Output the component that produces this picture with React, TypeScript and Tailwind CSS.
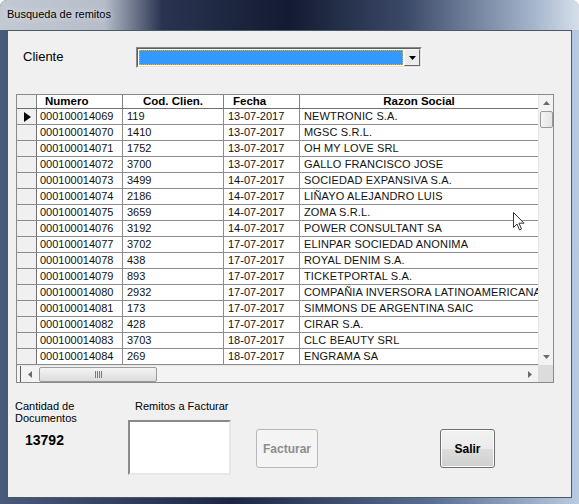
import { ReactNode } from "react";

const ROWS: [string, string, string, string][] = [
  ["000100014069", "119", "13-07-2017", "NEWTRONIC S.A."],
  ["000100014070", "1410", "13-07-2017", "MGSC S.R.L."],
  ["000100014071", "1752", "13-07-2017", "OH MY LOVE SRL"],
  ["000100014072", "3700", "13-07-2017", "GALLO FRANCISCO JOSE"],
  ["000100014073", "3499", "14-07-2017", "SOCIEDAD EXPANSIVA S.A."],
  ["000100014074", "2186", "14-07-2017", "LIÑAYO ALEJANDRO LUIS"],
  ["000100014075", "3659", "14-07-2017", "ZOMA S.R.L."],
  ["000100014076", "3192", "14-07-2017", "POWER CONSULTANT SA"],
  ["000100014077", "3702", "17-07-2017", "ELINPAR SOCIEDAD ANONIMA"],
  ["000100014078", "438", "17-07-2017", "ROYAL DENIM S.A."],
  ["000100014079", "893", "17-07-2017", "TICKETPORTAL S.A."],
  ["000100014080", "2932", "17-07-2017", "COMPAÑIA INVERSORA LATINOAMERICANA S.A."],
  ["000100014081", "173", "17-07-2017", "SIMMONS DE ARGENTINA SAIC"],
  ["000100014082", "428", "17-07-2017", "CIRAR S.A."],
  ["000100014083", "3703", "18-07-2017", "CLC BEAUTY SRL"],
  ["000100014084", "269", "18-07-2017", "ENGRAMA SA"],
];

const SANS = "font-['Liberation_Sans',Arial,sans-serif]";

function Arrow({ dir }: { dir: "up" | "down" | "left" | "right" }) {
  const points = {
    up: "0,4 3.5,0 7,4",
    down: "0,0 3.5,4 7,0",
    left: "4,0 0,3.5 4,7",
    right: "0,0 4,3.5 0,7",
  }[dir];
  const size = dir === "up" || dir === "down" ? { w: 7, h: 4 } : { w: 4, h: 7 };
  return (
    <svg width={size.w} height={size.h} viewBox={`0 0 ${size.w} ${size.h}`}>
      <polygon points={points} fill="#6b6b6b" />
    </svg>
  );
}

function HeaderCell({ w, children, className = "" }: { w: string; children?: ReactNode; className?: string }) {
  return (
    <div className={`${w} h-full shrink-0 border-r border-[#7f7f7f] text-[11.5px] font-bold leading-[13px] text-black ${className}`}>
      {children}
    </div>
  );
}

function Grid() {
  return (
    <div className="ml-[8px] mt-[26px] flex h-[289px] w-[538px] flex-col border border-[#8a8a8a] bg-white">
      <div className="flex min-h-0 flex-1">
        <div className="flex w-[521px] flex-col overflow-hidden">
          <div className={`flex h-[14px] shrink-0 border-b border-[#6f6f6f] ${SANS}`}>
            <HeaderCell w="w-[20px]" className="bg-[#f0f0f0]" />
            <HeaderCell w="w-[86px]" className="pl-[8px]">Numero</HeaderCell>
            <HeaderCell w="w-[101px]" className="text-center">Cod. Clien.</HeaderCell>
            <HeaderCell w="w-[76px]" className="pl-[9px]">Fecha</HeaderCell>
            <HeaderCell w="w-[238px]" className="border-r-0 text-center">Razon Social</HeaderCell>
          </div>
          {ROWS.map((row, i) => (
            <div key={row[0]} className={`flex h-[16px] shrink-0 border-b border-[#8c8c8c] text-[11px] leading-[15px] text-[#111] ${SANS}`}>
              <div className="flex w-[20px] shrink-0 items-center justify-center border-r border-[#6f6f6f] bg-[#f0f0f0]">
                {i === 0 && (
                  <svg width="7" height="10" viewBox="0 0 7 10" className="ml-[1px]">
                    <polygon points="0,0 7,5 0,10" fill="#000" />
                  </svg>
                )}
              </div>
              <div className="w-[86px] shrink-0 overflow-hidden whitespace-nowrap border-r border-[#8c8c8c] pl-[3px]">{row[0]}</div>
              <div className="w-[101px] shrink-0 overflow-hidden whitespace-nowrap border-r border-[#8c8c8c] pl-[4px]">{row[1]}</div>
              <div className="w-[76px] shrink-0 overflow-hidden whitespace-nowrap border-r border-[#8c8c8c] pl-[4px]">{row[2]}</div>
              <div className="w-[238px] shrink-0 overflow-hidden whitespace-nowrap pl-[4px] tracking-[0.15px]">{row[3]}</div>
            </div>
          ))}
        </div>
        {/* vertical scrollbar */}
        <div className="flex w-[15px] flex-col items-center border-l border-[#e6e6e6] bg-[#f3f3f3]">
          <div className="flex h-[16px] w-full items-center justify-center">
            <Arrow dir="up" />
          </div>
          <div className="h-[17px] w-[13px] rounded-[2px] border border-[#9a9a9a] bg-[linear-gradient(90deg,#f4f4f4,#e4e4e4)]" />
          <div className="flex-1" />
          <div className="flex h-[16px] w-full items-center justify-center">
            <Arrow dir="down" />
          </div>
        </div>
      </div>
      {/* horizontal scrollbar */}
      <div className="flex h-[17px] shrink-0">
        <div className="flex w-[521px] items-center border-t border-[#e6e6e6] bg-[#f3f3f3]">
          <div className="flex h-full w-[4px] border-r border-[#5a5a5a]" />
          <div className="flex h-full w-[18px] items-center justify-center">
            <Arrow dir="left" />
          </div>
          <div className="flex h-[15px] w-[118px] items-center justify-center rounded-[2px] border border-[#9a9a9a] bg-[linear-gradient(180deg,#f4f4f4,#dcdcdc)]">
            <div className="flex gap-[1px]">
              <div className="h-[7px] w-[1px] bg-[#7a7a7a]" />
              <div className="h-[7px] w-[1px] bg-[#7a7a7a]" />
              <div className="h-[7px] w-[1px] bg-[#7a7a7a]" />
              <div className="h-[7px] w-[1px] bg-[#7a7a7a]" />
            </div>
          </div>
          <div className="flex-1" />
          <div className="flex h-full w-[16px] items-center justify-center">
            <Arrow dir="right" />
          </div>
        </div>
        <div className="w-[15px] bg-[#dcdcdc]" />
      </div>
    </div>
  );
}

function ComboBox() {
  return (
    <div className="flex h-[21px] w-[286px] border border-t-[#8a8a8a] border-l-[#8a8a8a] border-b-[#f8f8f8] border-r-[#f8f8f8] bg-white">
      <div className="flex flex-1 border border-t-[#5e5e5e] border-l-[#5e5e5e] border-b-[#dcdcdc] border-r-[#dcdcdc]">
        <div className="m-[1px] flex-1 border border-dotted border-[#c8b066] bg-[#3399ff]" />
        <div className="flex w-[16px] items-center justify-center border border-t-[#f8f8f8] border-l-[#f8f8f8] border-b-[#6a6a6a] border-r-[#6a6a6a] bg-[#ececec]">
          <svg width="7" height="4" viewBox="0 0 7 4">
            <polygon points="0,0 3.5,4 7,0" fill="#000" />
          </svg>
        </div>
      </div>
    </div>
  );
}

export default function App() {
  return (
    <div className="relative h-[504px] w-[579px] overflow-hidden rounded-t-[7px] bg-[linear-gradient(90deg,#4a5a7a_0%,#1c2642_40%,#5a7090_75%,#b9cbe0_100%)]">
      <div className="flex h-[30px] items-start bg-[linear-gradient(90deg,#c3c9d2_0%,#b6bdc9_18%,#2a3451_28%,#131b31_50%,#3b4968_70%,#a4b4cb_92%,#d6dfea_100%)] pl-[7px] pt-[7px]">
        <span className="font-['Liberation_Sans',Arial,sans-serif] text-[11px] leading-[15px] text-black [text-shadow:0_0_6px_#e8ecf2]">
          Busqueda de remitos
        </span>
      </div>
      <div className={`mx-[7px] flex h-[468px] flex-col border border-[#4d5766] bg-[#f0f0f0] pt-[16px] ${SANS}`}>
        <div className="flex h-[21px] items-center">
          <div className="-mt-[3px] w-[128px] pl-[15px] text-[13px] leading-[15px] text-black">Cliente</div>
          <ComboBox />
        </div>
        <Grid />
        <div className="mt-[17px] flex items-start text-[11px] leading-[12px] text-black">
          <div className="ml-[7px] w-[113px]">
            <div>Cantidad de</div>
            <div>Documentos</div>
            <div className="mt-[8px] pl-[10px] text-[14px] font-bold leading-[16px]">13792</div>
          </div>
          <div className="w-[103px]">
            <div className="pl-[7px]">Remitos a Facturar</div>
            <div className="mt-[8px] h-[55px] w-[103px] border-2 border-t-[#8a8a8a] border-l-[#8a8a8a] border-b-[#e8e8e8] border-r-[#e8e8e8] bg-white" />
          </div>
          <button
            type="button"
            disabled
            className="ml-[25px] mt-[29px] h-[39px] w-[62px] rounded-[3px] border border-[#b5b9bc] bg-[#f4f4f4] text-[12px] font-bold text-[#8d8d8d]"
          >
            Facturar
          </button>
          <button
            type="button"
            className="ml-[122px] mt-[29px] h-[39px] w-[55px] rounded-[3px] border border-[#707070] bg-[linear-gradient(180deg,#f2f2f2_0%,#ebebeb_50%,#dddddd_51%,#cfcfcf_100%)] text-[12px] font-bold text-black shadow-[inset_0_0_0_1px_#fcfcfc]"
          >
            Salir
          </button>
        </div>
      </div>
      <svg className="absolute left-[513px] top-[212px]" width="12" height="19" viewBox="0 0 12 19">
        <path d="M0.5 0.5 L0.5 15.5 L4 12 L6.5 18 L8.5 17 L6 11.2 L11 11.2 Z" fill="#fff" stroke="#333" strokeWidth="1" strokeLinejoin="round" />
      </svg>
    </div>
  );
}
